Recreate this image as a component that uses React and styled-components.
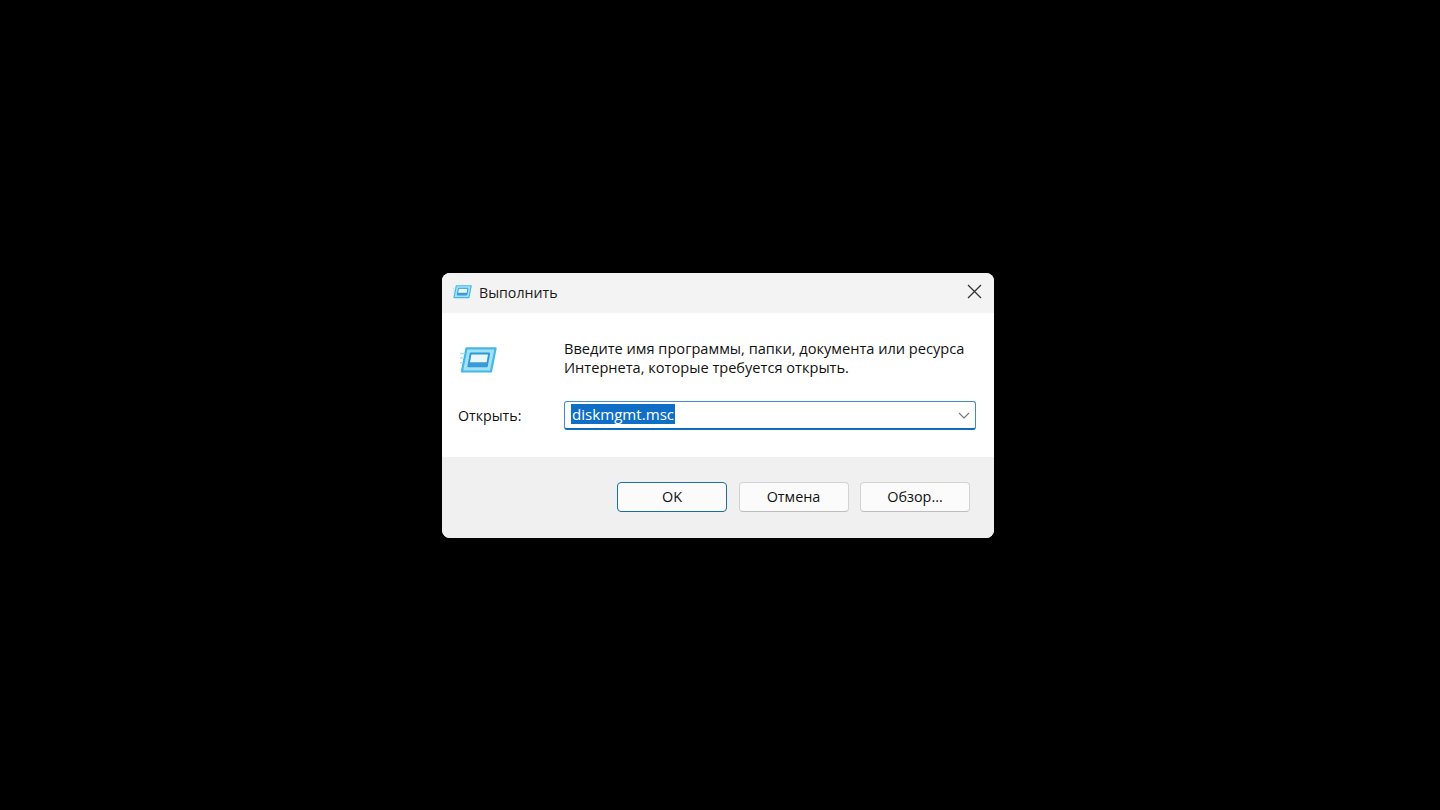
import React from "react";
import styled, { createGlobalStyle } from "styled-components";

const GlobalStyle = createGlobalStyle`
  html, body {
    margin: 0;
    height: 100%;
    background: #000;
  }
  #root {
    height: 100%;
  }
`;

const RunIcon = ({ size }) => (
  <svg width={size} height={size * 0.7} viewBox="0 0 40 28" fill="none">
    <path d="M7 1.5H38.5L33.5 26.5H2Z" fill="#a5e0f7" stroke="#45b8e8" strokeWidth="2.4" strokeLinejoin="round" />
    <path d="M11.5 7H31.5L29 21H9Z" fill="#e9f8fd" stroke="#2a9ad6" strokeWidth="2" strokeLinejoin="round" />
    <path d="M10 16.5H30L29 21H9Z" fill="#3d9ad8" />
    <path d="M0 7H5M0 12H4M0 17H3" stroke="#a5e0f7" strokeWidth="1.6" />
  </svg>
);

const App = () => (
  <Screen>
    <GlobalStyle />
    <Dialog>
      <TitleBar>
        <TitleGroup>
          <RunIcon size={19} />
          <Title>Выполнить</Title>
        </TitleGroup>
        <CloseButton>
          <svg width="15" height="15" viewBox="0 0 15 15" fill="none">
            <path d="M1 1L14 14M14 1L1 14" stroke="#333" strokeWidth="1.3" />
          </svg>
        </CloseButton>
      </TitleBar>
      <Body>
        <PromptRow>
          <IconSlot>
            <RunIcon size={37} />
          </IconSlot>
          <Prompt>
            Введите имя программы, папки, документа или ресурса
            <br />
            Интернета, которые требуется открыть.
          </Prompt>
        </PromptRow>
        <OpenRow>
          <OpenLabel>Открыть:</OpenLabel>
          <ComboBox>
            <Selected>diskmgmt.msc</Selected>
            <svg width="12" height="7" viewBox="0 0 12 7" fill="none">
              <path d="M1 1L6 6L11 1" stroke="#777" strokeWidth="1.1" />
            </svg>
          </ComboBox>
        </OpenRow>
      </Body>
      <Footer>
        <Button $primary>OK</Button>
        <Button>Отмена</Button>
        <Button>Обзор...</Button>
      </Footer>
    </Dialog>
  </Screen>
);

export default App;

const Screen = styled.div`
  height: 100%;
  box-sizing: border-box;
  padding: 1px 4px 0 0;
  display: flex;
  align-items: center;
  justify-content: center;
  overflow: hidden;
  background: #000;
  font-family: "Open Sans", "Noto Sans", sans-serif;
  font-size: 14.2px;
  color: #111;
`;

const Dialog = styled.div`
  width: 552px;
  height: 265px;
  display: flex;
  flex-direction: column;
  border-radius: 8px;
  overflow: hidden;
  background: #fff;
`;

const TitleBar = styled.div`
  height: 40px;
  flex: none;
  display: flex;
  align-items: center;
  justify-content: space-between;
  padding: 0 12px 2px 11px;
  box-sizing: border-box;
  background: #f3f3f3;
`;

const TitleGroup = styled.div`
  display: flex;
  align-items: center;
  gap: 7px;
`;

const Title = styled.span`
  font-size: 14.2px;
  color: #1a1a1a;
`;

const CloseButton = styled.div`
  display: flex;
  margin-top: -2px;
`;

const Body = styled.div`
  flex: 1;
  padding: 26px 18px 0 16px;
  display: flex;
  flex-direction: column;
`;

const PromptRow = styled.div`
  display: flex;
  height: 62px;
`;

const IconSlot = styled.div`
  width: 106px;
  flex: none;
  padding-top: 8px;
  padding-left: 2px;
  box-sizing: border-box;
`;

const Prompt = styled.div`
  font-size: 14.6px;
  line-height: 19px;
  white-space: nowrap;
`;

const OpenRow = styled.div`
  display: flex;
  align-items: center;
`;

const OpenLabel = styled.span`
  width: 106px;
  flex: none;
`;

const ComboBox = styled.div`
  width: 412px;
  height: 29px;
  box-sizing: border-box;
  display: flex;
  align-items: center;
  justify-content: space-between;
  padding: 0 5px 0 6px;
  border: 1.5px solid #3f8fc4;
  border-bottom: 2px solid #0f6cbd;
  border-radius: 3px;
  background: #fff;
`;

const Selected = styled.span`
  background: #0f6fc6;
  color: #fff;
  font-size: 15.1px;
  line-height: 20px;
  padding: 0 1px;
  margin-top: -2px;
`;

const Footer = styled.div`
  height: 81px;
  flex: none;
  box-sizing: border-box;
  background: #f0f0f0;
  display: flex;
  justify-content: flex-end;
  gap: 11.5px;
  padding: 25px 24px 0 0;
`;

const Button = styled.div`
  width: 110px;
  height: 30px;
  box-sizing: border-box;
  display: flex;
  align-items: center;
  justify-content: center;
  padding-bottom: 1px;
  border-radius: 4px;
  background: #fbfbfb;
  font-size: 14.4px;
  border: ${(p) => (p.$primary ? "1.5px solid #1a6fa8" : "1px solid #d3d3d3")};
  border-bottom-color: ${(p) => (p.$primary ? "#1a6fa8" : "#bdbdbd")};
`;
